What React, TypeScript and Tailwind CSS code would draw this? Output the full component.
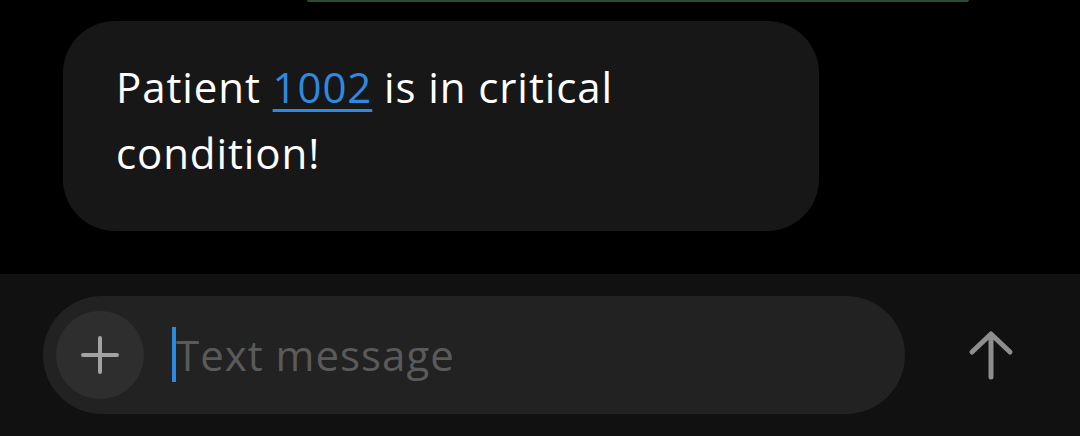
export default function App() {
  return (
    <div className="w-[1080px] h-[436px] bg-black flex flex-col overflow-hidden" style={{ fontFamily: "'Open Sans', Lato, sans-serif" }}>
      <div className="h-[21px] flex justify-start">
        <div className="ml-[307px] w-[662px] h-[2px] bg-[#2f4a33] rounded-b-full" />
      </div>
      <div className="h-[253px] pl-[63px]">
        <div className="w-[756px] h-[210px] rounded-[52px] bg-[#171717] pl-[53px] pt-[33px] text-white text-[42px] leading-[66px] tracking-[0.9px]">
          <p>
            Patient <span className="text-[#2d8ae0] underline decoration-[3px] underline-offset-[6px]">1002</span> is in critical
            <br />
            condition!
          </p>
        </div>
      </div>
      <div className="flex-1 bg-[#111111] flex items-center pl-[43px] pr-[60px] pb-[1px]">
        <div className="w-[862px] h-[118px] rounded-full bg-[#222222] flex items-center pl-[13px]">
          <div className="w-[88px] h-[88px] rounded-full bg-[#2e2e2e] flex items-center justify-center">
            <svg width="40" height="40" viewBox="0 0 40 40" fill="none" stroke="#a3a3a3" strokeWidth="4" strokeLinecap="round">
              <path d="M20 3v34M3 20h34" />
            </svg>
          </div>
          <div className="ml-[28px] flex items-center">
            <div className="w-[4px] h-[55px] bg-[#2d8ae0]" />
            <span className="text-[42px] text-[#5a5a5a] tracking-[1px]">Text message</span>
          </div>
        </div>
        <div className="flex-1 flex justify-end pr-[6px]">
          <svg width="46" height="50" viewBox="0 0 46 50" fill="none" stroke="#8e8e8e" strokeWidth="5" strokeLinecap="round" strokeLinejoin="round">
            <path d="M23 47V4M4 22L23 4L42 22" />
          </svg>
        </div>
      </div>
    </div>
  );
}
